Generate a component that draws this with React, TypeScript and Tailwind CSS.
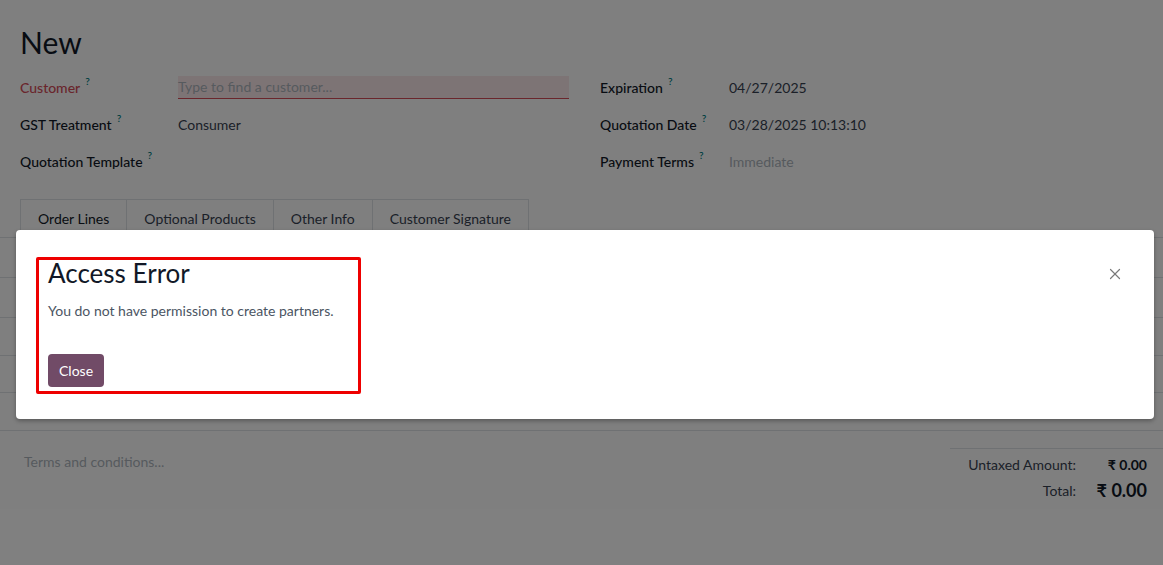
import { X } from "lucide-react";

const Help = () => <sup className="ml-[5px] -mt-[3px] text-[10px] font-semibold text-[#017e84]">?</sup>;

function Field({ label, children, red }: { label: string; children?: React.ReactNode; red?: boolean }) {
  return (
    <div className="flex h-[37px] items-center">
      <div className={`flex w-[158px] shrink-0 items-center font-medium ${red ? "text-[#d44c59]" : "text-[#111827]"}`}>
        {label}
        <Help />
      </div>
      <div className="flex-1">{children}</div>
    </div>
  );
}

function RightField({ label, children }: { label: string; children?: React.ReactNode }) {
  return (
    <div className="flex h-[37px] items-center">
      <div className="flex w-[129px] shrink-0 items-center font-medium text-[#111827]">
        {label}
        <Help />
      </div>
      <div className="flex-1">{children}</div>
    </div>
  );
}

const tabs = ["Order Lines", "Optional Products", "Other Info", "Customer Signature"];

export default function App() {
  return (
    <div className="relative h-[565px] w-full overflow-hidden bg-white font-['Lato',sans-serif] text-[14px] leading-[21px] text-[#374151]">
      {/* form behind the dialog */}
      <div className="px-5 pt-[24px]">
        <h1 className="text-[30px] leading-[36px] text-[#111827]">New</h1>
        <div className="mt-[9px] flex">
          <div className="w-[549px]">
            <Field label="Customer" red>
              <div className="h-[23px] border-b border-[#d44c59] bg-[#fbe9eb] text-[#adb5bd]">Type to find a customer...</div>
            </Field>
            <Field label="GST Treatment">Consumer</Field>
            <Field label="Quotation Template" />
          </div>
          <div className="ml-[31px] flex-1">
            <RightField label="Expiration">04/27/2025</RightField>
            <RightField label="Quotation Date">03/28/2025 10:13:10</RightField>
            <RightField label="Payment Terms">
              <span className="text-[#adb5bd]">Immediate</span>
            </RightField>
          </div>
        </div>
      </div>

      <div className="mt-[19px] flex border-b border-[#dee2e6] px-5">
        {tabs.map((t, i) => (
          <div
            key={t}
            className={`-mb-px flex h-[39px] items-center border border-[#dee2e6] px-[17px] ${i === 0 ? "border-b-white bg-white text-[#111827]" : "text-[#374151]"} ${i > 0 ? "-ml-px" : ""}`}
          >
            {t}
          </div>
        ))}
      </div>
      <div className="h-[40px] border-b border-[#dee2e6]" />
      <div className="h-[40px] border-b border-[#dee2e6]" />
      <div className="h-[38px] border-b border-[#dee2e6]" />
      <div className="h-[37px] border-b border-[#dee2e6]" />
      <div className="h-[38px] border-b border-[#dee2e6]" />

      <div className="flex justify-between">
        <div className="pl-6 pt-[20px] text-[#adb5bd]">Terms and conditions...</div>
        <div className="mt-[17px] w-[213px] border-t border-[#dee2e6] pr-4 pt-[2px]">
          <div className="flex h-[26px] items-center justify-end">
            <span className="text-[#374151]">Untaxed Amount:</span>
            <span className="w-[71px] text-right font-bold text-[#111827]">₹ 0.00</span>
          </div>
          <div className="flex h-[26px] items-center justify-end">
            <span className="text-[#374151]">Total:</span>
            <span className="w-[71px] text-right text-[18px] font-bold text-[#111827]">₹ 0.00</span>
          </div>
        </div>
      </div>

      {/* backdrop + dialog */}
      <div className="absolute inset-0 bg-black/50 px-4 pt-[230px] pr-[9px]">
        <div className="relative h-[189px] rounded-[4px] bg-white pl-5 pt-[27px] shadow-[0_2px_4px_rgba(0,0,0,0.3)]">
          <div className="h-[137px] w-[325px] rounded-[2px] border-[3px] border-[#ee0000] pl-[9px]">
            <h4 className="-mt-[2px] text-[26px] leading-[30px] text-[#111827]">Access Error</h4>
            <p className="mt-[12px] text-[#4b5563]">You do not have permission to create partners.</p>
            <button className="mt-[33px] h-[33px] rounded-[4px] bg-[#714b67] px-[11px] text-white">Close</button>
          </div>
          <button className="absolute right-[30px] top-[35px] text-[#7a7a7a]">
            <X size={18} strokeWidth={1.6} />
          </button>
        </div>
      </div>
    </div>
  );
}
